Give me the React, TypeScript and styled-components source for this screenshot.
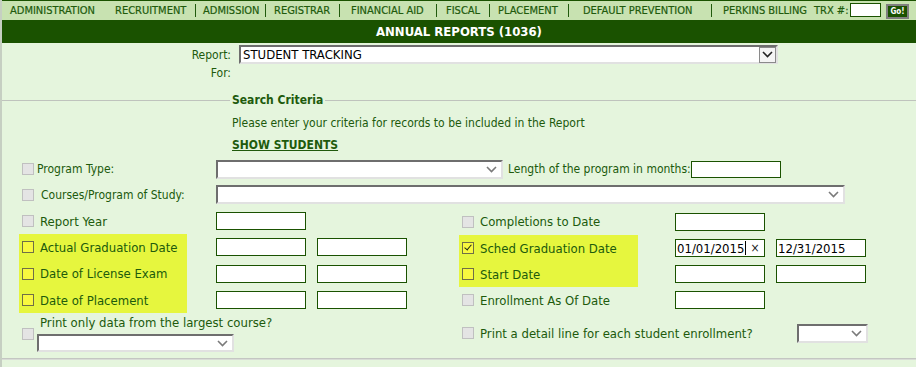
import React from 'react';
import styled, { createGlobalStyle } from 'styled-components';

const FONT = `"DejaVu Sans Condensed", "DejaVu Sans", Tahoma, Verdana, sans-serif`;
const GREEN = '#205a0c';
const DARK = '#1a5200';
const HILITE = '#e6f63e';

const GlobalStyle = createGlobalStyle`
  html, body {
    margin: 0;
    padding: 0;
    background: #e5f5dd;
  }
  body {
    font-family: ${FONT};
    color: ${GREEN};
  }
`;

const Page = styled.div`
  width: 914px;
  height: 367px;
  border-left: 2px solid #c6cfc2;
  background: #e5f5dd;
  overflow: hidden;
`;

const Nav = styled.nav`
  display: flex;
  align-items: center;
  height: 19px;
  border-top: 1px solid ${DARK};
  background: #c8e2b1;
  font-size: 11px;
  white-space: nowrap;
`;

const NavItem = styled.span<{ $w: number; $lead: number }>`
  flex: none;
  width: ${(p) => p.$w}px;
  padding-left: ${(p) => p.$lead}px;
  box-sizing: border-box;
  color: ${GREEN};
  -webkit-text-stroke: 0.2px ${GREEN};
`;

const NavSep = styled.span`
  flex: none;
  width: 1px;
  height: 13px;
  background: ${GREEN};
`;

const TrxInput = styled.span`
  flex: none;
  width: 31px;
  height: 14px;
  box-sizing: border-box;
  border: 1px solid ${DARK};
  background: #fff;
  margin-top: -2px;
`;

const GoButton = styled.span`
  flex: none;
  margin-left: 5px;
  width: 23px;
  height: 15px;
  box-sizing: border-box;
  border: 2px solid #7f7f7f;
  background: ${DARK};
  color: #fff;
  font-size: 8px;
  font-weight: bold;
  display: flex;
  align-items: center;
  justify-content: center;
  margin-top: 1px;
`;

const TitleBar = styled.div`
  height: 23px;
  background: ${DARK};
  color: #fff;
  font-size: 13px;
  font-weight: bold;
  display: flex;
  align-items: center;
  justify-content: center;
`;

const ReportGrid = styled.div`
  display: grid;
  grid-template-columns: 229px 539px;
  grid-template-rows: 19px 14px;
  column-gap: 8px;
  row-gap: 2px;
  padding-top: 2px;
  font-size: 12px;
`;

const FieldLabel = styled.div`
  display: flex;
  align-items: center;
  justify-content: flex-end;
`;

const Select = styled.div<{ $w: number; $h?: number }>`
  flex: none;
  width: ${(p) => p.$w}px;
  height: ${(p) => p.$h ?? 19}px;
  box-sizing: border-box;
  background: #fff;
  border-style: solid;
  border-width: 2px;
  border-color: #6e6e6e #e1e1e1 #e1e1e1 #6e6e6e;
  display: flex;
  align-items: center;
  justify-content: space-between;
  padding: 0 4px 0 2px;
  color: #000;
  font-size: 13px;
`;

const ArrowBox = styled.span`
  width: 17px;
  height: 16px;
  box-sizing: border-box;
  border: 1px solid #8a8a8a;
  background: #f4f4f4;
  display: flex;
  align-items: center;
  justify-content: center;
  margin-right: -4px;
`;

const Legend = styled.div`
  display: flex;
  align-items: center;
  margin-top: 13px;
  height: 14px;
  gap: 2px;
  font-size: 12px;
  font-weight: bold;
  &::before {
    content: '';
    width: 228px;
    height: 1px;
    background: #bfc3bd;
  }
  &::after {
    content: '';
    flex: 1;
    height: 1px;
    background: #bfc3bd;
  }
`;

const Intro = styled.div<{ $bold?: boolean; $top: number }>`
  padding-left: 230px;
  margin-top: ${(p) => p.$top}px;
  line-height: 14px;
  font-size: 12px;
  font-weight: ${(p) => (p.$bold ? 'bold' : 'normal')};
  text-decoration: ${(p) => (p.$bold ? 'underline' : 'none')};
`;

const Criteria = styled.div`
  padding-left: 17px;
`;

const WideRow = styled.div<{ $h: number; $top?: number }>`
  display: flex;
  align-items: center;
  height: ${(p) => p.$h}px;
  margin-top: ${(p) => p.$top ?? 0}px;
  font-size: 12px;
  white-space: nowrap;
`;

const SideText = styled.span`
  margin-left: 5px;
`;

const Halves = styled.div`
  display: flex;
`;

const Half = styled.div<{ $w?: number }>`
  display: flex;
  flex-direction: column;
  width: ${(p) => (p.$w ? `${p.$w}px` : 'auto')};
  flex: ${(p) => (p.$w ? 'none' : '1')};
`;

const Row = styled.div<{ $h: number }>`
  display: flex;
  align-items: stretch;
  height: ${(p) => p.$h}px;
`;

const CheckCell = styled.label<{ $w: number; $mr?: number; $hl?: boolean; $gap?: number; $size?: number }>`
  flex: none;
  width: ${(p) => p.$w}px;
  margin-right: ${(p) => p.$mr ?? 0}px;
  box-sizing: border-box;
  padding-left: 3px;
  display: flex;
  align-items: center;
  gap: ${(p) => p.$gap ?? 6}px;
  background: ${(p) => (p.$hl ? HILITE : 'transparent')};
  font-size: ${(p) => p.$size ?? 13}px;
  white-space: nowrap;
`;

const Check = styled.span<{ $tone: 'gray' | 'yellow'; $checked?: boolean }>`
  flex: none;
  position: relative;
  width: 12px;
  height: 12px;
  box-sizing: border-box;
  border: 1px solid ${(p) => (p.$tone === 'yellow' ? '#6f6f47' : '#c0c0c0')};
  background: ${(p) => (p.$tone === 'yellow' ? '#f8f83f' : '#e4e4e4')};
  &::after {
    content: '';
    display: ${(p) => (p.$checked ? 'block' : 'none')};
    position: absolute;
    left: 3px;
    top: 0px;
    width: 3px;
    height: 6px;
    border: solid #1c2a10;
    border-width: 0 1.5px 1.5px 0;
    transform: rotate(40deg);
  }
`;

const Inputs = styled.div`
  display: flex;
  align-items: center;
  gap: 11px;
`;

const TextBox = styled.div<{ $w?: number; $h?: number }>`
  flex: none;
  width: ${(p) => p.$w ?? 90}px;
  height: ${(p) => p.$h ?? 18}px;
  box-sizing: border-box;
  border: 1px solid ${DARK};
  background: #fff;
  color: #000;
  font-size: 13px;
  display: flex;
  align-items: center;
  padding-left: 1px;
  white-space: nowrap;
  overflow: hidden;
`;

const Caret = styled.span`
  width: 1px;
  height: 14px;
  background: #000;
  margin-left: 1px;
`;

const Clear = styled.span`
  margin-left: 4px;
  font-size: 12px;
  color: #222;
`;

const BottomLeft = styled.div`
  display: flex;
  align-items: center;
  gap: 3px;
  padding-left: 3px;
  height: 42px;
`;

const Stack = styled.div`
  display: flex;
  flex-direction: column;
  gap: 4px;
  font-size: 13px;
  white-space: nowrap;
`;

const StackLabel = styled.span`
  padding-left: 3px;
  line-height: 14px;
`;

const BottomRight = styled.div`
  display: flex;
  align-items: center;
  height: 40px;
`;

const Rule = styled.div`
  margin-top: 3px;
  height: 1px;
  background: #c4c6c2;
  border-bottom: 1px solid #d8dcd6;
`;

const Chevron = ({ color = '#7a7a7a' }: { color?: string }) => (
  <svg width="11" height="7" viewBox="0 0 11 7">
    <path d="M1 1l4.5 4.5L10 1" fill="none" stroke={color} strokeWidth="1.6" />
  </svg>
);

const navItems = [
  { label: 'ADMINISTRATION', w: 113, lead: 8, sep: false },
  { label: 'RECRUITMENT', w: 80, lead: 0, sep: true },
  { label: 'ADMISSION', w: 69, lead: 7, sep: true },
  { label: 'REGISTRAR', w: 73, lead: 8, sep: true },
  { label: 'FINANCIAL AID', w: 96, lead: 11, sep: true },
  { label: 'FISCAL', w: 52, lead: 9, sep: true },
  { label: 'PLACEMENT', w: 78, lead: 8, sep: true },
  { label: 'DEFAULT PREVENTION', w: 142, lead: 14, sep: true },
  { label: 'PERKINS BILLING', w: 102, lead: 11, sep: false },
  { label: 'TRX #:', w: 36, lead: 0, sep: false },
];

export default function App() {
  return (
    <>
      <GlobalStyle />
      <Page>
        <Nav>
          {navItems.map((n) => (
            <React.Fragment key={n.label}>
              <NavItem $w={n.w} $lead={n.lead}>
                {n.label}
              </NavItem>
              {n.sep && <NavSep />}
            </React.Fragment>
          ))}
          <TrxInput />
          <GoButton>Go!</GoButton>
        </Nav>
        <TitleBar>ANNUAL REPORTS (1036)</TitleBar>

        <ReportGrid>
          <FieldLabel>Report:</FieldLabel>
          <Select $w={539}>
            <span>STUDENT TRACKING</span>
            <ArrowBox>
              <Chevron color="#222" />
            </ArrowBox>
          </Select>
          <FieldLabel>For:</FieldLabel>
          <div />
        </ReportGrid>

        <Legend>Search Criteria</Legend>
        <Intro $top={9}>Please enter your criteria for records to be included in the Report</Intro>
        <Intro $top={8} $bold>
          SHOW STUDENTS
        </Intro>

        <Criteria>
          <WideRow $h={24} $top={5}>
            <CheckCell $w={197} $gap={3} $size={12}>
              <Check $tone="gray" />
              Program Type:
            </CheckCell>
            <Select $w={287}>
              <span />
              <Chevron />
            </Select>
            <SideText>Length of the program in months:</SideText>
            <TextBox $w={90} $h={17} />
          </WideRow>
          <WideRow $h={27}>
            <CheckCell $w={197} $gap={7} $size={12}>
              <Check $tone="gray" />
              Courses/Program of Study:
            </CheckCell>
            <Select $w={629}>
              <span />
              <Chevron />
            </Select>
          </WideRow>

          <Halves>
            <Half $w={440}>
              <Row $h={26}>
                <CheckCell $w={197}>
                  <Check $tone="gray" />
                  Report Year
                </CheckCell>
                <Inputs>
                  <TextBox />
                </Inputs>
              </Row>
              <Row $h={26}>
                <CheckCell $w={168} $mr={29} $hl>
                  <Check $tone="yellow" />
                  Actual Graduation Date
                </CheckCell>
                <Inputs>
                  <TextBox />
                  <TextBox />
                </Inputs>
              </Row>
              <Row $h={27}>
                <CheckCell $w={168} $mr={29} $hl>
                  <Check $tone="yellow" />
                  Date of License Exam
                </CheckCell>
                <Inputs>
                  <TextBox />
                  <TextBox />
                </Inputs>
              </Row>
              <Row $h={26}>
                <CheckCell $w={168} $mr={29} $hl>
                  <Check $tone="yellow" />
                  Date of Placement
                </CheckCell>
                <Inputs>
                  <TextBox />
                  <TextBox />
                </Inputs>
              </Row>
            </Half>

            <Half>
              <Row $h={27}>
                <CheckCell $w={216}>
                  <Check $tone="gray" />
                  Completions to Date
                </CheckCell>
                <Inputs>
                  <TextBox />
                </Inputs>
              </Row>
              <Row $h={26}>
                <CheckCell $w={179} $mr={37} $hl>
                  <Check $tone="yellow" $checked />
                  Sched Graduation Date
                </CheckCell>
                <Inputs>
                  <TextBox>
                    01/01/2015
                    <Caret />
                    <Clear>×</Clear>
                  </TextBox>
                  <TextBox>12/31/2015</TextBox>
                </Inputs>
              </Row>
              <Row $h={26}>
                <CheckCell $w={179} $mr={37} $hl>
                  <Check $tone="yellow" />
                  Start Date
                </CheckCell>
                <Inputs>
                  <TextBox />
                  <TextBox />
                </Inputs>
              </Row>
              <Row $h={26}>
                <CheckCell $w={216}>
                  <Check $tone="gray" />
                  Enrollment As Of Date
                </CheckCell>
                <Inputs>
                  <TextBox />
                </Inputs>
              </Row>
            </Half>
          </Halves>

          <Halves>
            <Half $w={440}>
              <BottomLeft>
                <Check $tone="gray" />
                <Stack>
                  <StackLabel>Print only data from the largest course?</StackLabel>
                  <Select $w={197} $h={18}>
                    <span />
                    <Chevron />
                  </Select>
                </Stack>
              </BottomLeft>
            </Half>
            <Half>
              <BottomRight>
                <CheckCell $w={338}>
                  <Check $tone="gray" />
                  Print a detail line for each student enrollment?
                </CheckCell>
                <Select $w={71} $h={19}>
                  <span />
                  <Chevron />
                </Select>
              </BottomRight>
            </Half>
          </Halves>
        </Criteria>
        <Rule />
      </Page>
    </>
  );
}
